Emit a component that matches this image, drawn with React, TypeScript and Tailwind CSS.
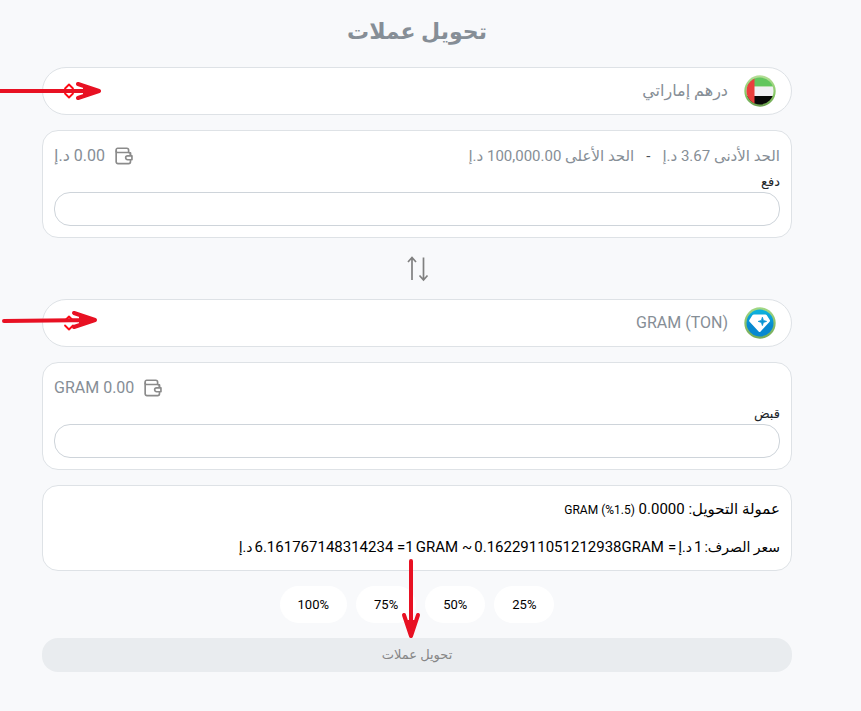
import { useState } from "react";

const quickShares = [25, 50, 75, 100];

function WalletIcon() {
  return (
    <svg viewBox="0.5 0 19 19.5" className="h-[18px] w-[18px] shrink-0" fill="none" stroke="#8b8b8b" strokeWidth="1.800" strokeLinecap="round" strokeLinejoin="round" aria-hidden="true">
      <path d="M17 6.300V8.800M17 14.500V16a2 2 0 0 1-2 2H3.500a2 2 0 0 1-2-2V3a1.600 1.600 0 0 1 1.600-1.600h9.900a2 2 0 0 1 2 2V6" />
      <path d="M1.500 4.300a1.600 1.600 0 0 0 1.600 1.700h11.900a2 2 0 0 1 2 2" />
      <path d="M18.600 9.600v4.200h-4.700a2.100 2.100 0 0 1 0-4.200z" />
    </svg>
  );
}

function EmiratesFlag() {
  return (
    <svg viewBox="0 0 32 32" className="h-8 w-8 shrink-0" aria-hidden="true">
      <defs>
        <clipPath id="flag-disc"><circle cx="16" cy="16" r="13.500" /></clipPath>
        <linearGradient id="flag-ring" x1="0" y1="0" x2="0" y2="1">
          <stop offset="0" stopColor="#b5df98" />
          <stop offset="0.600" stopColor="#86c965" />
          <stop offset="1" stopColor="#6b9c50" />
        </linearGradient>
      </defs>
      <circle cx="16" cy="16" r="15.700" fill="url(#flag-ring)" />
      <g clipPath="url(#flag-disc)">
        <rect width="32" height="11.500" fill="#62c65e" />
        <rect y="11.500" width="32" height="9.500" fill="#f1f0f4" />
        <rect y="21" width="32" height="11" fill="#080808" />
        <rect width="10.500" height="32" fill="#ea3f3d" />
      </g>
    </svg>
  );
}

function GramCoin() {
  return (
    <svg viewBox="0 0 32 32" className="h-8 w-8 shrink-0" aria-hidden="true">
      <defs>
        <linearGradient id="coin-fill" x1="0" y1="0" x2="0" y2="1">
          <stop offset="0.100" stopColor="#0cb0dc" />
          <stop offset="0.600" stopColor="#0788d0" />
        </linearGradient>
        <linearGradient id="coin-ring" x1="0" y1="0" x2="0" y2="1">
          <stop offset="0" stopColor="#a3d884" />
          <stop offset="1" stopColor="#74aa56" />
        </linearGradient>
      </defs>
      <circle cx="16" cy="16" r="15.700" fill="url(#coin-ring)" />
      <circle cx="16" cy="16" r="13.500" fill="url(#coin-fill)" />
      <path d="M10 7.500h11.200q1 0 1.600.8l3 4.700q.5.900-.2 1.700l-9 9.900q-1 1-2 0l-9-9.900q-.7-.8-.2-1.700l3-4.700q.6-.8 1.600-.8z" fill="#fff" />
      <path d="M18.400 10.200l1 3.200 3.200 1-3.200 1-1 3.200-1-3.200-3.200-1 3.200-1z" fill="#0b95d4" stroke="#0b95d4" strokeWidth="0.800" />
    </svg>
  );
}

function UpDownChevrons() {
  return (
    <svg viewBox="0 0 12 16" className="pointer-events-none h-4 w-3 shrink-0" fill="none" stroke="#ff0a14" strokeWidth="1.800" strokeLinecap="round" strokeLinejoin="round" aria-hidden="true">
      <path d="M2 5.500l4-4 4 4M2 10.500l4 4 4-4" />
    </svg>
  );
}

function CurrencyPicker({ label, option, icon }: { label: string; option: string; icon: React.ReactNode }) {
  return (
    <div className="flex h-12 items-center rounded-3xl border border-[#dee2e6] bg-white ps-[15px] pe-5">
      {icon}
      <select aria-label={label} className="h-full min-w-0 flex-1 appearance-none bg-transparent ps-4 text-base text-[#868e96] outline-none">
        <option>{option}</option>
      </select>
      <UpDownChevrons />
    </div>
  );
}

function AmountCard({ id, label, limits, balance }: { id: string; label: string; limits?: React.ReactNode; balance: React.ReactNode }) {
  const [amount, setAmount] = useState("");
  return (
    <section className="rounded-2xl border border-[#dee2e6] bg-white px-[11px] pt-[13px] pb-[11px]">
      <div className="flex h-6 items-center justify-between text-[#868e96]">
        <p className="flex items-center text-[15px]">{limits}</p>
        <p className="flex items-center gap-2.5 text-base">
          <WalletIcon />
          {balance}
        </p>
      </div>
      <label htmlFor={id} className="block h-6 text-[13px] leading-7 text-[#212529]">{label}</label>
      <input id={id} value={amount} onChange={(e) => setAmount(e.target.value)} inputMode="decimal" className="block h-[34px] w-full rounded-2xl border border-[#ced4da] bg-white px-3 outline-none" />
    </section>
  );
}

export default function App() {
  return (
    <div dir="rtl" lang="ar" className="relative min-h-screen overflow-hidden bg-[#f8f9fb] font-[Roboto,'DejaVu_Sans',sans-serif] text-black">
      <main className="flex flex-col gap-[15px] pt-3 pr-[69px] pb-10 pl-[42px]">
        <h1 className="h-10 text-center text-[22px] leading-10 font-bold text-[#868e96]">تحويل عملات</h1>

        <CurrencyPicker label="عملة الدفع" option="درهم إماراتي" icon={<EmiratesFlag />} />
        <AmountCard
          id="pay"
          label="دفع"
          limits={
            <>
              <span>الحد الأدنى 3.67 د.إ</span>
              <span className="px-3 text-[#495057]">-</span>
              <span>الحد الأعلى 100,000.00 د.إ</span>
            </>
          }
          balance={<span>0.00 د.إ</span>}
        />

        <button type="button" aria-label="تبديل" className="flex h-[31px] items-center justify-center self-center">
          <svg viewBox="0 0 24 26" className="h-[26px] w-6" fill="none" stroke="#808080" strokeWidth="1.700" aria-hidden="true">
            <path d="M7 24V1.500M3 6l4-4.500L11 6M18.500 1.500V24M14.500 19.500l4 4.500 4-4.500" />
          </svg>
        </button>

        <CurrencyPicker label="عملة القبض" option="GRAM (TON)" icon={<GramCoin />} />
        <AmountCard id="receive" label="قبض" balance={<span dir="ltr">GRAM 0.00</span>} />

        <section className="flex flex-col gap-3.5 rounded-2xl border border-[#dee2e6] bg-white px-[11px] py-[11px] text-[15px] leading-6">
          <p>
            عمولة التحويل: 0.0000 <span dir="ltr" className="inline-block text-xs">GRAM (%1.5)</span>
          </p>
          <p className="flex whitespace-nowrap">
            <span className="text-sm leading-6">سعر الصرف:</span>
            <span className="px-0.5">1</span>
            <span className="text-sm leading-6">د.إ</span>
            <span className="ps-0.5 pe-1">=</span>
            <span dir="ltr"><span>0.1622911051212938</span><span>GRAM</span></span>
            <span className="ps-0.5 pe-1">~</span>
            <span dir="ltr">6.161767148314234 =1<span className="ps-0.5">GRAM</span></span>
            <span className="ps-0.5 text-sm leading-6">د.إ</span>
          </p>
        </section>

        <div className="flex justify-center gap-[9px]">
          {quickShares.map((share) => (
            <button key={share} type="button" dir="ltr" className="h-[37px] rounded-full bg-white px-[18px] text-[13px]">
              {share}%
            </button>
          ))}
        </div>

        <button type="button" className="h-[34px] rounded-2xl bg-[#e9ecef] text-[13px] text-[#868686]">تحويل عملات</button>
      </main>

      <svg viewBox="0 0 104 24" className="pointer-events-none absolute top-[79px] left-0 h-6 w-[104px]" fill="none" stroke="#e81123" strokeWidth="4" strokeLinecap="round" strokeLinejoin="round" aria-hidden="true">
        <path d="M-3 12h101M78 5l21 7-21 7" />
        <path d="M84 9l15 3-15 3z" fill="#e81123" strokeWidth="2" />
      </svg>
      <svg viewBox="0 0 104 24" className="pointer-events-none absolute top-[308px] left-0 h-6 w-[104px]" fill="none" stroke="#e81123" strokeWidth="4" strokeLinecap="round" strokeLinejoin="round" aria-hidden="true">
        <path d="M4 13L94 12M74 5l21 7-21 7" />
        <path d="M80 9l15 3-15 3z" fill="#e81123" strokeWidth="2" />
      </svg>
      <svg viewBox="0 0 24 84" className="pointer-events-none absolute top-[557px] left-[399px] h-[84px] w-6" fill="none" stroke="#e81123" strokeWidth="4" strokeLinecap="round" strokeLinejoin="round" aria-hidden="true">
        <path d="M12 4v74M5 58l7 21 7-21" />
        <path d="M9 64l3 15 3-15z" fill="#e81123" strokeWidth="2" />
      </svg>
    </div>
  );
}
